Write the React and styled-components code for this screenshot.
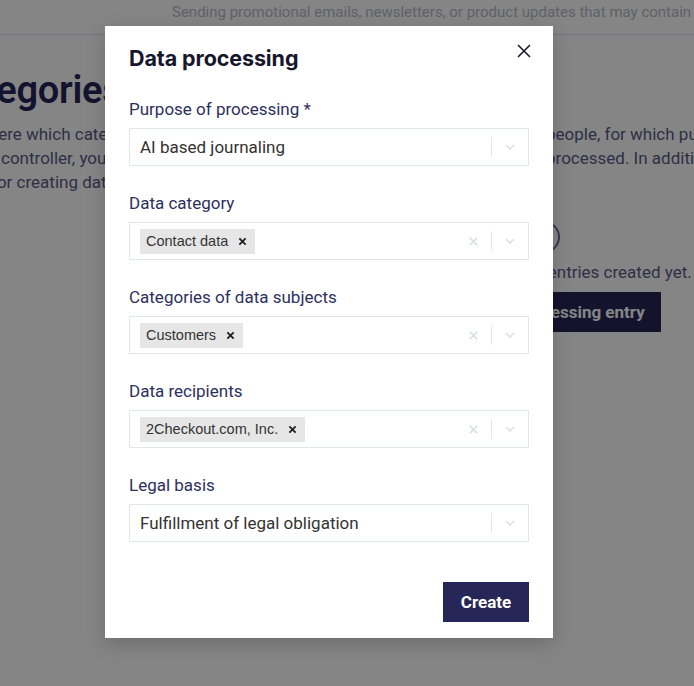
import React from "react";
import styled, { createGlobalStyle } from "styled-components";

const Global = createGlobalStyle`
  html, body { margin: 0; padding: 0; background: #ffffff; }
  body { font-family: Roboto, "Noto Sans", Arial, sans-serif; overflow: hidden; }
  * { box-sizing: border-box; }
`;

const Page = styled.div`
  position: relative;
  width: 694px;
  height: 686px;
  overflow: hidden;
  background: #ffffff;
`;

const TopBar = styled.div`
  height: 35px;
  border-bottom: 1px solid #dcdde8;
  padding-left: 172px;
  display: flex;
  align-items: flex-start;
  padding-top: 2px;
  white-space: nowrap;
  font-size: 15px;
  line-height: 20px;
  color: #b9bac8;
`;

const Section = styled.div`
  display: flex;
  flex-direction: column;
`;

const Heading = styled.h1`
  margin: 33px 0 0 -142px;
  font-size: 38px;
  line-height: 44px;
  font-weight: 600;
  color: #262659;
  white-space: nowrap;
  letter-spacing: -0.3px;
`;

const Para = styled.div`
  margin-top: 10px;
  display: flex;
  flex-direction: column;
  font-size: 17px;
  line-height: 24px;
  color: #5a5c85;
`;

const ParaLine = styled.div`
  display: grid;
  grid-template-columns: 546px 1fr;
  white-space: nowrap;
  overflow: hidden;
`;

const ParaCell = styled.span`
  overflow: hidden;
  margin-left: ${(p) => p.$shift || 0}px;
`;

const Empty = styled.div`
  margin: 27px 0 0 344px;
  width: 400px;
  display: flex;
  flex-direction: column;
  align-items: center;
`;

const EmptyIcon = styled.div`
  width: 32px;
  height: 32px;
  border-radius: 50%;
  border: 2px solid #6d6f95;
`;

const EmptyText = styled.div`
  margin-top: 7px;
  font-size: 17px;
  line-height: 24px;
  color: #5a5c85;
  white-space: nowrap;
`;

const PrimaryButton = styled.button`
  font-family: Roboto, Arial, sans-serif;
  border: 0;
  border-radius: 0;
  background: #262659;
  color: #ffffff;
  font-weight: 700;
  font-size: 17px;
  height: 40px;
  padding: 0 16px;
  cursor: pointer;
  white-space: nowrap;
`;

const BgButton = styled(PrimaryButton)`
  margin-top: 8px;
  margin-left: 1px;
`;

const Overlay = styled.div`
  position: absolute;
  inset: 0;
  background: rgba(0, 0, 0, 0.478);
  display: flex;
  justify-content: flex-start;
  align-items: flex-start;
  padding: 26px 0 0 105px;
`;

const Modal = styled.div`
  position: relative;
  width: 448px;
  height: 612px;
  background: #ffffff;
  box-shadow: 0 6px 18px rgba(0, 0, 0, 0.18);
  padding: 16px 24px 16px;
  display: flex;
  flex-direction: column;
`;

const Title = styled.h2`
  margin: 0;
  font-family: Inter, "Liberation Sans", Arial, sans-serif;
  font-weight: 700;
  font-size: 21.5px;
  line-height: 32px;
  color: #16172b;
  letter-spacing: -0.1px;
`;

const Close = styled.button`
  position: absolute;
  top: 14px;
  right: 18px;
  width: 22px;
  height: 22px;
  padding: 0;
  border: 0;
  background: transparent;
  display: flex;
  align-items: center;
  justify-content: center;
  cursor: pointer;
`;

const Form = styled.div`
  margin-top: 24px;
  display: flex;
  flex-direction: column;
  gap: 26px;
`;

const Field = styled.div`
  display: flex;
  flex-direction: column;
  gap: 8px;
`;

const Label = styled.label`
  font-size: 17px;
  line-height: 22px;
  font-weight: 400;
  color: #2d2f5e;
`;

const SelectBox = styled.div`
  height: 38px;
  border: 1px solid #e2e7ef;
  display: flex;
  align-items: center;
  padding-left: 10px;
  background: #ffffff;
`;

const Value = styled.div`
  flex: 1;
  font-size: 17px;
  color: #333333;
  white-space: nowrap;
`;

const Tags = styled.div`
  flex: 1;
  display: flex;
  gap: 4px;
`;

const Tag = styled.div`
  display: inline-flex;
  align-items: center;
  height: 25px;
  background: #e6e6e6;
  padding: 0 8px 0 6px;
  gap: 10px;
  font-family: "Liberation Sans", Arial, sans-serif;
  font-size: 14.5px;
  color: #333333;
`;

const TagRemove = styled.span`
  display: inline-flex;
  width: 9px;
  justify-content: center;
`;

const Indicators = styled.div`
  display: flex;
  align-items: center;
  height: 100%;
`;

const IndicatorBtn = styled.div`
  width: 36px;
  height: 100%;
  display: flex;
  align-items: center;
  justify-content: center;
`;

const Separator = styled.span`
  width: 1px;
  height: 20px;
  background: #e2e7ef;
`;

const Footer = styled.div`
  margin-top: auto;
  display: flex;
  justify-content: flex-end;
`;

const CreateButton = styled(PrimaryButton)`
  width: 86px;
  padding: 0;
`;

const Chevron = () => (
  <svg width="16" height="16" viewBox="0 0 20 20">
    <path d="M5 7.5 L10 12.5 L15 7.5" fill="none" stroke="#dbe1ea" strokeWidth="2" />
  </svg>
);

const ClearX = () => (
  <svg width="15" height="15" viewBox="0 0 20 20">
    <path d="M5 5 L15 15 M15 5 L5 15" fill="none" stroke="#d8dce3" strokeWidth="2.2" />
  </svg>
);

const SmallX = () => (
  <svg width="9" height="9" viewBox="0 0 10 10">
    <path d="M1.5 1.5 L8.5 8.5 M8.5 1.5 L1.5 8.5" fill="none" stroke="#222" strokeWidth="2" />
  </svg>
);

const CloseIcon = () => (
  <svg width="14" height="14" viewBox="0 0 14 14">
    <path d="M1 1 L13 13 M13 1 L1 13" fill="none" stroke="#1b1c2e" strokeWidth="1.6" />
  </svg>
);

function Select({ value, tags }) {
  const multi = Array.isArray(tags);
  return (
    <SelectBox>
      {multi ? (
        <Tags>
          {tags.map((t) => (
            <Tag key={t}>
              {t}
              <TagRemove>
                <SmallX />
              </TagRemove>
            </Tag>
          ))}
        </Tags>
      ) : (
        <Value>{value}</Value>
      )}
      <Indicators>
        {multi && (
          <IndicatorBtn>
            <ClearX />
          </IndicatorBtn>
        )}
        <Separator />
        <IndicatorBtn>
          <Chevron />
        </IndicatorBtn>
      </Indicators>
    </SelectBox>
  );
}

const fields = [
  { label: "Purpose of processing *", value: "AI based journaling" },
  { label: "Data category", tags: ["Contact data"] },
  { label: "Categories of data subjects", tags: ["Customers"] },
  { label: "Data recipients", tags: ["2Checkout.com, Inc."] },
  { label: "Legal basis", value: "Fulfillment of legal obligation" },
];

export default function App() {
  return (
    <>
      <Global />
      <Page>
        <TopBar>Sending promotional emails, newsletters, or product updates that may contain</TopBar>
        <Section>
          <Heading>Data categories</Heading>
          <Para>
            <ParaLine>
              <ParaCell $shift={-14}>Here which categories of personal data you process from</ParaCell>
              <ParaCell>people, for which purposes</ParaCell>
            </ParaLine>
            <ParaLine>
              <ParaCell $shift={-12}>s controller, you define how long your data are being</ParaCell>
              <ParaCell>processed. In addition</ParaCell>
            </ParaLine>
            <ParaLine>
              <ParaCell $shift={-9}>for creating data processing entries.</ParaCell>
              <ParaCell></ParaCell>
            </ParaLine>
          </Para>
          <Empty>
            <EmptyIcon />
            <EmptyText>No data processing entries created yet.</EmptyText>
            <BgButton>Add data processing entry</BgButton>
          </Empty>
        </Section>
        <Overlay>
          <Modal>
            <Title>Data processing</Title>
            <Close aria-label="Close">
              <CloseIcon />
            </Close>
            <Form>
              {fields.map((f) => (
                <Field key={f.label}>
                  <Label>{f.label}</Label>
                  <Select value={f.value} tags={f.tags} />
                </Field>
              ))}
            </Form>
            <Footer>
              <CreateButton>Create</CreateButton>
            </Footer>
          </Modal>
        </Overlay>
      </Page>
    </>
  );
}
